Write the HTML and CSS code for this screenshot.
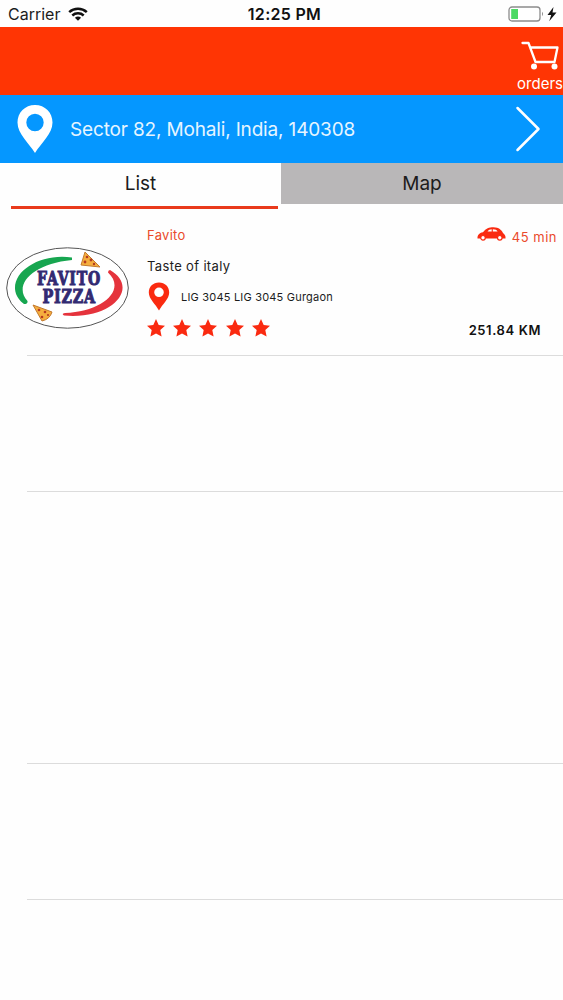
FILE: index.html
```
<!DOCTYPE html>
<html lang="en">
<head>
    <meta charset="utf-8">
    <meta name="viewport" content="width=device-width, initial-scale=1">
    <title>Restaurants</title>

    <link rel="stylesheet" href="styles.css">
</head>
<body>

    <div class="status-bar">
        <div class="status-left">
            <span class="carrier">Carrier</span>
            <svg class="wifi" width="20" height="15" viewBox="0 0 20 15" fill="none" stroke="#111" stroke-width="2.5">
                <path d="M1.2 5.2C6.2 .6 13.800 .6 18.800 5.2"/>
                <path d="M4.300 8.500C7.500 5.600 12.500 5.600 15.700 8.500"/>
                <path d="M6.900 10.700Q10 8.200 13.100 10.700L10 13.800Z" fill="#111" stroke="none"/>
            </svg>
        </div>
        <span class="clock">12:25 PM</span>
        <div class="status-right">
            <svg width="49" height="16" viewBox="0 0 49 16">
                <rect x="1" y="1" width="31" height="14" rx="3" fill="#fff" stroke="#8c8c8c" stroke-width="1.300"/>
                <rect x="3.200" y="3" width="6.800" height="10" fill="#4cd964"/>
                <path d="M34 5.800Q36 8 34 10.200Z" fill="#8c8c8c"/>
                <path d="M45.500 1L39.500 9H43.200L41.200 15.200L48.500 6.600H44.500Z" fill="#111"/>
            </svg>
        </div>
    </div>

    <div class="header">
        <a class="orders">
            <svg width="38" height="30" viewBox="0 0 38 30" fill="none" stroke="#fff" stroke-width="2.300" stroke-linejoin="round" stroke-linecap="round">
                <path d="M1.500 3H7.500L14.500 22H33.500L36.500 7.500H9.500"/>
                <circle cx="13" cy="26.500" r="3" fill="#fff" stroke="none"/>
                <circle cx="33.500" cy="26.500" r="3" fill="#fff" stroke="none"/>
            </svg>
            <span>orders</span>
        </a>
    </div>

    <div class="location">
        <svg class="location-pin" width="36" height="48" viewBox="0 0 36 48">
            <path fill="#fff" fill-rule="evenodd" d="M18 0C8 0 .5 7.500 .5 17.500C.5 29 12 38 18 48C24 38 35.500 29 35.500 17.500C35.500 7.500 28 0 18 0ZM18 8.800A8.700 8.700 0 1 1 18 26.200A8.700 8.700 0 1 1 18 8.800Z"/>
        </svg>
        <span class="location-text">Sector 82, Mohali, India, 140308</span>
        <svg class="chevron" width="26" height="46" viewBox="0 0 26 46" fill="none" stroke="#fff" stroke-width="2.500" stroke-linecap="round" stroke-linejoin="round">
            <path d="M2.500 2L23.500 23L2.500 44"/>
        </svg>
    </div>

    <div class="tabs">
        <div class="tab tab-active">List</div>
        <div class="tab tab-map">Map</div>
    </div>

    <div class="list">
        <div class="row">
            <svg class="logo" width="124" height="84" viewBox="0 0 124 84">
                <ellipse cx="61.500" cy="42" rx="60.800" ry="40.200" fill="#fff" stroke="#555" stroke-width="1"/>
                <path fill="#17a650" d="M66 11.500C37 7 8 23 9 43C9.500 50 14 55 18 58Q22 58 21.500 55C7 39 26 18 66 14Z"/>
                <path fill="#e5333c" d="M104 24C134 41 107 74 58 69.500Q55 67.500 59 67C96 66 121 44 102 26.500Q102 24 104 24Z"/>
                <g fill="#f5ae3e" stroke="#c37a2e" stroke-width="1">
                    <path d="M79 6L94 21L75 19Z"/>
                    <path d="M27 59L46 66Q44 73 36 75Z"/>
                </g>
                <g fill="#b53a20">
                    <circle cx="81" cy="11" r="1.300"/><circle cx="85" cy="14" r="1.400"/><circle cx="79" cy="16" r="1.400"/><circle cx="88" cy="18" r="1.200"/>
                    <circle cx="33" cy="64" r="1.300"/><circle cx="39" cy="66" r="1.300"/><circle cx="36" cy="71" r="1.300"/><circle cx="42" cy="69" r="1.100"/>
                </g>
                <text class="logo-text" x="31" y="39" textLength="64" lengthAdjust="spacingAndGlyphs">FAVITO</text>
                <text class="logo-text" x="36.500" y="57.200" textLength="53.500" lengthAdjust="spacingAndGlyphs">PIZZA</text>
            </svg>
            <div class="info">
                <div class="name">Favito</div>
                <div class="tagline">Taste of italy</div>
                <div class="address">
                    <svg width="22" height="29" viewBox="0 0 22 29">
                        <path fill="#fa2a10" fill-rule="evenodd" d="M11 .5C5 .5 .8 4.800 .8 10.500C.8 17 7.500 22 11 28.500C14.500 22 21.200 17 21.200 10.500C21.200 4.800 17 .5 11 .5ZM11 5.500A4.800 4.800 0 1 1 11 15.100A4.800 4.800 0 1 1 11 5.500Z"/>
                    </svg>
                    <span>LIG 3045 LIG 3045 Gurgaon</span>
                </div>
                <div class="stars">
                    <svg width="18" height="18" viewBox="0 0 18 18"><path d="M9 0L11.700 5.900L18 6.700L13.300 11.100L14.600 17.500L9 14.400L3.400 17.500L4.700 11.100L0 6.700L6.300 5.900Z"/></svg>
                    <svg width="18" height="18" viewBox="0 0 18 18"><path d="M9 0L11.700 5.900L18 6.700L13.300 11.100L14.600 17.500L9 14.400L3.400 17.500L4.700 11.100L0 6.700L6.300 5.900Z"/></svg>
                    <svg width="18" height="18" viewBox="0 0 18 18"><path d="M9 0L11.700 5.900L18 6.700L13.300 11.100L14.600 17.500L9 14.400L3.400 17.500L4.700 11.100L0 6.700L6.300 5.900Z"/></svg>
                    <svg width="18" height="18" viewBox="0 0 18 18"><path d="M9 0L11.700 5.900L18 6.700L13.300 11.100L14.600 17.500L9 14.400L3.400 17.500L4.700 11.100L0 6.700L6.300 5.900Z"/></svg>
                    <svg width="18" height="18" viewBox="0 0 18 18"><path d="M9 0L11.700 5.900L18 6.700L13.300 11.100L14.600 17.500L9 14.400L3.400 17.500L4.700 11.100L0 6.700L6.300 5.900Z"/></svg>
                </div>
            </div>
            <div class="meta">
                <div class="time">
                    <svg width="29" height="14" viewBox="0 0 29 14">
                        <path fill="#fa2a10" d="M.5 11.500C.3 8 2 6 6 5.200C9 1.500 12 .3 16.500 .3C22 .5 24.500 3 26 6C28 7.500 28.800 9 28.500 11.500Z"/>
                        <path fill="#fff" d="M10.500 4.500C11.500 3 13 2.300 14.700 2.300V4.500ZM15.800 2.300C18.500 2.300 19.700 3 20.600 4.500H15.800Z"/>
                        <g fill="#fff" stroke="#fa2a10" stroke-width="1.200">
                            <circle cx="6" cy="10.800" r="2.300"/>
                            <circle cx="22.800" cy="10.800" r="2.300"/>
                        </g>
                    </svg>
                    <span>45 min</span>
                </div>
                <div class="distance">251.84 KM</div>
            </div>
        </div>
        <div class="row"></div>
        <div class="row row-tall"></div>
        <div class="row"></div>
    </div>

</body>
</html>
```
FILE: styles.css
```
body {
    margin: 0;
    font-family: Inter, "Liberation Sans", sans-serif;
    color: #1c1c1c;
    background-color: #fefefe;
}

svg {
    display: block;
    flex-shrink: 0;
}

.status-bar {
    display: grid;
    grid-template-columns: 1fr auto 1fr;
    align-items: center;
    height: 27px;
    padding: 0 6px 0 8px;
    box-sizing: border-box;
    font-size: 16px;
    line-height: 28px;
}

.status-left {
    display: flex;
    align-items: center;
    gap: 8px;
}

.clock {
    font-weight: 600;
    letter-spacing: 0.3px;
    color: #111;
    padding-left: 4px;
}

.status-right {
    display: flex;
    justify-content: flex-end;
}

.header {
    display: flex;
    justify-content: flex-end;
    height: 68px;
    background-color: #ff3504;
}

.orders {
    display: flex;
    flex-direction: column;
    align-items: flex-end;
    padding: 13px 0 0;
    color: #fff;
    font-size: 15px;
    line-height: 18px;
}

.orders svg {
    margin-right: 4px;
}

.orders span {
    margin-top: 5px;
}

.location {
    display: flex;
    align-items: center;
    height: 68px;
    padding: 0 22px 0 17px;
    box-sizing: border-box;
    background-color: #0597ff;
    color: #e6f5ff;
}

.location-text {
    flex: 1;
    margin-left: 17px;
    font-size: 19px;
    letter-spacing: -0.16px;
}

.tabs {
    display: flex;
    height: 57px;
}

.tab {
    flex: 1;
    height: 41px;
    font-size: 19px;
    line-height: 42px;
    text-align: center;
}

.tab-active {
    height: 43px;
    margin: 0 3px 0 11px;
    border-bottom: 3px solid #e93a1c;
    padding-right: 8px;
}

.tab-map {
    flex: 0 0 282px;
    background-color: #b9b7b8;
}

.row {
    position: relative;
    display: flex;
    height: 136px;
    box-sizing: border-box;
}

/* separator is inset on the left only */
.row::after {
    content: "";
    position: absolute;
    left: 27px;
    right: 0;
    bottom: 0;
    height: 1px;
    background-color: #dcdcdc;
}

.row-tall {
    height: 272px;
}

.logo {
    margin: 26px 0 0 6px;
}

.logo-text {
    font-family: "DejaVu Serif", serif;
    font-size: 18px;
    font-weight: 700;
    letter-spacing: 1px;
    fill: #322a72;
    stroke: #322a72;
    stroke-width: 1px;
}

.info {
    flex: 1;
    padding: 5px 0 0 17px;
}

.name {
    font-size: 13px;
    line-height: 20px;
    letter-spacing: 0.3px;
    color: #ea4a2c;
}

.tagline {
    margin-top: 11px;
    font-size: 13px;
    line-height: 20px;
    letter-spacing: 0.35px;
}

.address {
    display: flex;
    align-items: center;
    gap: 11px;
    margin-top: 6px;
    font-size: 11px;
    letter-spacing: 0.2px;
}

.address svg {
    margin-left: 1px;
}

.stars {
    display: flex;
    gap: 8.200px;
    margin-top: 8px;
    fill: #fa2a10;
}

.meta {
    display: flex;
    flex-direction: column;
    align-items: flex-end;
}

.time {
    display: flex;
    gap: 6px;
    padding: 7px 6px 0 0;
    font-size: 13px;
    line-height: 20px;
    letter-spacing: 0.5px;
    color: #ea4a2c;
}

.distance {
    margin: 73px 22px 0 0;
    font-size: 13px;
    font-weight: 600;
    line-height: 20px;
    letter-spacing: 0.6px;
    color: #111;
}
```
